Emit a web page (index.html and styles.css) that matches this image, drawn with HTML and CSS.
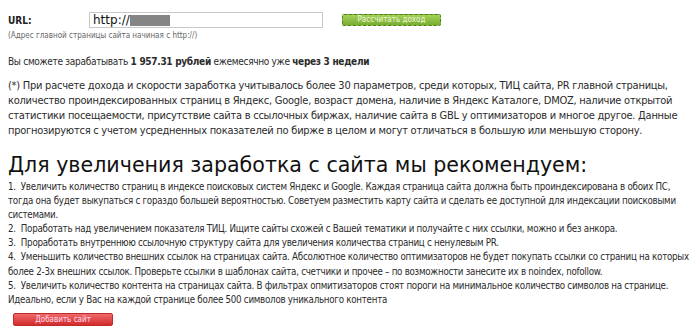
FILE: index.html
```html
<!DOCTYPE html>
<html lang="ru">
<head>
<meta charset="utf-8">
<title>Расчет дохода</title>
<link rel="stylesheet" href="styles.css">
</head>
<body>
<div class="page">
  <form class="url-form">
    <label class="url-label">URL:</label>
    <div class="url-input"><span class="url-proto">http://</span><span class="url-mask"></span></div>
    <button type="button" class="btn-calc">Рассчитать доход</button>
  </form>
  <p class="hint">(Адрес главной страницы сайта начиная с http://)</p>
  <p class="result">Вы сможете зарабатывать <b>1 957.31 рублей</b> ежемесячно уже <b>через 3 недели</b></p>
  <p class="note">(*) При расчете дохода и скорости заработка учитывалось более 30 параметров, среди которых, ТИЦ сайта, PR главной страницы, количество проиндексированных страниц в Яндекс, Google, возраст домена, наличие в Яндекс Каталоге, DMOZ, наличие открытой статистики посещаемости, присутствие сайта в ссылочных биржах, наличие сайта в GBL у оптимизаторов и многое другое. Данные прогнозируются с учетом усредненных показателей по бирже в целом и могут отличаться в большую или меньшую сторону.</p>
  <h1 class="title">Для увеличения заработка с сайта мы рекомендуем:</h1>
  <ol class="tips">
    <li>1.&nbsp; Увеличить количество страниц в индексе поисковых систем Яндекс и Google. Каждая страница сайта должна быть проиндексирована в обоих ПС, тогда она будет выкупаться с гораздо большей вероятностью. Советуем разместить карту сайта и сделать ее доступной для индексации поисковыми системами.</li>
    <li>2.&nbsp; Поработать над увеличением показателя ТИЦ. Ищите сайты схожей с Вашей тематики и получайте с них ссылки, можно и без анкора.</li>
    <li>3.&nbsp; Проработать внутреннюю ссылочную структуру сайта для увеличения количества страниц с ненулевым PR.</li>
    <li>4.&nbsp; Уменьшить количество внешних ссылок на страницах сайта. Абсолютное количество оптимизаторов не будет покупать ссылки со страниц на которых более 2-3х внешних ссылок. Проверьте ссылки в шаблонах сайта, счетчики и прочее – по возможности занесите их в noindex, nofollow.</li>
    <li>5.&nbsp; Увеличить количество контента на страницах сайта. В фильтрах опмитизаторов стоят пороги на минимальное количество символов на странице. Идеально, если у Вас на каждой странице более 500 символов уникального контента</li>
  </ol>
  <button type="button" class="btn-add">Добавить сайт</button>
</div>
</body>
</html>
```
FILE: styles.css
```css
html, body {
  margin: 0;
  padding: 0;
  background: #fff;
}
body {
  font-family: "DejaVu Sans", Verdana, sans-serif;
  font-stretch: condensed;
  font-size: 11px;
  color: #2b2b2b;
}
.page {
  padding: 12px 8px 0 8px;
}
.url-form {
  display: flex;
  align-items: center;
  height: 16px;
}
.url-label {
  width: 81px;
  font-weight: bold;
  font-size: 10px;
  color: #222;
}
.url-input {
  width: 229px;
  height: 14px;
  border: 1px solid #c8c8c8;
  display: flex;
  align-items: center;
  padding-left: 3px;
  font-size: 12px;
  color: #111;
  font-stretch: normal;
}
.url-mask {
  display: inline-block;
  width: 40px;
  height: 11px;
  background: #858585;
}
.btn-calc {
  margin-left: 19px;
  width: 99px;
  height: 12px;
  padding: 0;
  border: 1px dashed #4f7d1c;
  border-radius: 2px;
  background: linear-gradient(#a6d257, #77ad33);
  color: #eef6dc;
  font-family: "DejaVu Sans", Verdana, sans-serif;
  font-stretch: condensed;
  font-size: 8px;
  line-height: 10px;
}
.hint {
  margin: 3px 0 0 0;
  font-size: 8px;
  color: #666;
}
.result {
  margin: 14px 0 0 0;
  font-size: 10px;
  letter-spacing: -0.3px;
  line-height: 15px;
}
.note {
  margin: 9px 0 0 0;
  letter-spacing: -0.25px;
  line-height: 15px;
}
.title {
  margin: 15px 0 0 0;
  font-family: "DejaVu Sans", Verdana, sans-serif;
  font-stretch: normal;
  font-weight: normal;
  font-size: 20.6px;
  line-height: 24px;
  color: #111;
}
.tips {
  list-style: none;
  margin: 3px 0 0 0;
  padding: 0;
  font-size: 9.7px;
  letter-spacing: -0.26px;
  line-height: 14.1px;
}
.btn-add {
  margin: 6px 0 0 5px;
  width: 100px;
  height: 13px;
  padding: 0;
  border: 1px solid #c22a2a;
  border-radius: 2px;
  background: linear-gradient(#f06a6a, #d22b2b);
  color: #fde;
  font-family: "DejaVu Sans", Verdana, sans-serif;
  font-stretch: condensed;
  font-size: 8px;
  line-height: 11px;
}
```
